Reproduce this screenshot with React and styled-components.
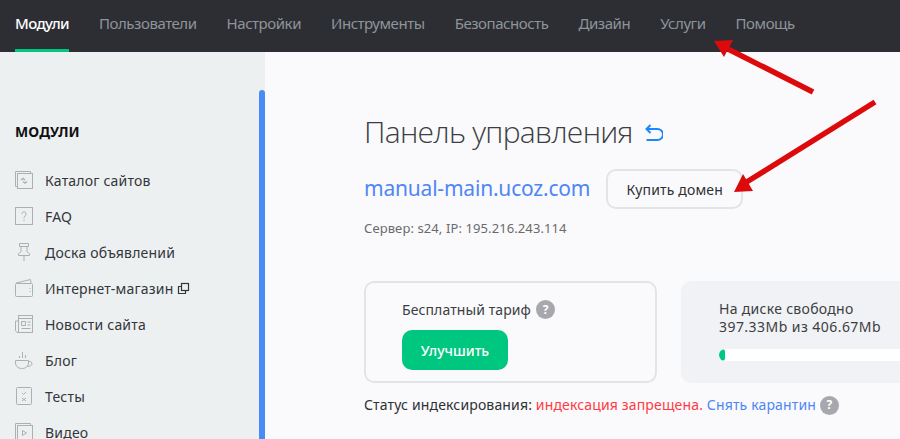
import React from "react";
import styled, { createGlobalStyle } from "styled-components";

const Global = createGlobalStyle`
  html, body { margin: 0; padding: 0; height: 439px; overflow: hidden; background: #fafafc; }
  body { font-family: "Noto Sans", "Liberation Sans", sans-serif; color: #2f3034; }
  * { box-sizing: border-box; }
`;
const Page = styled.div`
  position: relative; width: 900px; height: 439px; overflow: hidden;
  display: flex; flex-direction: column;
`;
const TopBar = styled.nav`
  height: 52px; flex: none; background: #2d2e33; display: flex; padding-left: 15px; gap: 30px;
`;
const TopLink = styled.a`
  height: 52px; display: block; padding-top: 14px; font-size: 15px; line-height: 18px;
  letter-spacing: ${p => (p.$active ? "-0.6px" : "-0.45px")}; font-weight: ${p => (p.$active ? 500 : 400)};
  color: ${p => (p.$active ? "#fff" : "#8f9499")};
  border-bottom: 3px solid ${p => (p.$active ? "#00c77f" : "transparent")};
`;
const Body = styled.div`
  flex: 1; display: flex; min-height: 0;
`;
const Sidebar = styled.aside`
  width: 265px; flex: none; background: #edf0f1; position: relative; padding: 71px 0 0 15px;
`;
const ScrollThumb = styled.div`
  position: absolute; top: 38px; right: 0; bottom: 0; width: 6px; background: #4a8cf7; border-radius: 3px 3px 0 0;
`;
const SideTitle = styled.h3`
  margin: 0 0 27px; font-size: 14px; line-height: 18px; font-weight: 700; color: #111; letter-spacing: 0.1px;
`;
const SideList = styled.ul`
  list-style: none; margin: 0; padding: 0; display: flex; flex-direction: column; gap: 12px;
`;
const SideItem = styled.li`
  height: 24px; display: flex; align-items: center; gap: 12px;
  font-size: 14px; line-height: 18px; color: #33363b; letter-spacing: 0.2px;
`;
const SideLabel = styled.span`
  padding-top: 2px; white-space: nowrap;
`;
const SideIcon = styled.svg`
  width: 18px; height: 18px; flex: none; fill: none; stroke: #adb0b2; stroke-width: 1;
`;
const External = styled.svg`
  width: 13px; height: 13px; margin-left: -8px; fill: none; stroke: #33363b; stroke-width: 1.2;
`;
const Main = styled.main`
  flex: 1; padding: 59px 0 0 99px; background: #fafafc; min-width: 0;
`;
const TitleRow = styled.div`
  display: flex; align-items: center; gap: 12px; height: 42px;
`;
const Title = styled.h1`
  margin: 0; font-family: "Open Sans", "Noto Sans", sans-serif; font-size: 30px; line-height: 42px; font-weight: 300; color: #3c3e43; letter-spacing: -0.72px;
`;
const ReturnIcon = styled.svg`
  width: 18px; height: 17px; flex: none; fill: none; stroke: #1c86ff; stroke-width: 2;
`;
const DomainRow = styled.div`
  margin-top: 16px; display: flex; align-items: center; gap: 16px; height: 40px;
`;
const Domain = styled.a`
  font-size: 21px; line-height: 24px; color: #4f86f7; letter-spacing: -0.2px; padding-bottom: 2px;
`;
const BuyButton = styled.button`
  width: 137px; height: 40px; background: #fafafc; border: 2px solid #e3e4e6; border-radius: 10px;
  font: inherit; font-size: 14px; color: #2f3034; padding: 0; letter-spacing: 0.15px;
`;
const Server = styled.p`
  margin: 11px 0 0; font-size: 13px; line-height: 16px; color: #6a6a6a; letter-spacing: 0.1px;
`;
const Cards = styled.div`
  margin-top: 45px; display: flex; gap: 24px;
`;
const PlanCard = styled.section`
  width: 293px; height: 102px; flex: none; border: 2px solid #e3e4e6; border-radius: 10px; padding: 15px 0 0 36px;
`;
const PlanLine = styled.div`
  display: flex; align-items: center; gap: 5px; height: 22px; font-size: 14px; color: #3c3e42; letter-spacing: 0.1px;
`;
const Help = styled.span`
  width: 19px; height: 19px; border-radius: 50%; background: #a7a8ad; color: #fff; flex: none;
  display: inline-flex; align-items: center; justify-content: center; font-size: 12px; font-weight: 700;
`;
const UpgradeButton = styled.button`
  display: block; margin-top: 10px; width: 106px; height: 40px; background: #00c77f; border: 0; border-radius: 10px;
  color: #fff; font: inherit; font-size: 14px; font-weight: 500; padding: 0; letter-spacing: 0;
`;
const DiskCard = styled.section`
  flex: 1; height: 102px; background: #f0f2f5; border-radius: 10px 0 0 10px; padding: 19px 0 0 38px;
  font-size: 14px; line-height: 18px; color: #3c3e42; letter-spacing: 0.3px;
`;
const DiskNumbers = styled.span`
  letter-spacing: 0.45px;
`;
const DiskBar = styled.div`
  margin-top: 13px; height: 12px; background: #fff; border-radius: 6px 0 0 6px; overflow: hidden;
`;
const DiskFill = styled.div`
  height: 100%; width: ${p => p.$width}px; background: #00c77f; border-radius: 6px;
`;
const StatusLine = styled.div`
  margin-top: 11px; display: flex; align-items: center; gap: 4px; font-size: 14px; line-height: 20px; color: #2f3034; letter-spacing: 0.15px; padding-top: 1px;
`;
const Danger = styled.span` color: #ff3b45; `;
const Link = styled.a` color: #4f86f7; `;
const Arrows = styled.svg`
  position: absolute; left: 0; top: 0; width: 900px; height: 439px; pointer-events: none;
`;

const icons = {
  catalog: <><path d="M15.500 2.500V.500H.500v15h2" /><rect x="2.500" y="2.500" width="15" height="15" /><path d="M6 9l2-1.500 2 1.500M8 10.500l2 1.500 2-1.500" strokeWidth="1.500" /></>,
  faq: <><rect x=".5" y=".5" width="17" height="17" /><path d="M7 7c0-3 4-3 4 0 0 2-2 2-2 4M9 12.500V14" /></>,
  board: <path d="M4.500.5h9v3h-9zM6 3.500v5L3.500 11v1.500h11V11L12 8.500v-5M9 12.500V18" />,
  shop: <><path d="M1 4L15.500.5 16 4" /><rect x=".5" y="4.500" width="17" height="13" rx="1" /><path d="M15 9v1M15 12v1" /></>,
  news: <><path d="M3.500 6H.5v9.500l1.500 2h1.500" /><rect x="3.500" y=".5" width="14" height="17" /><path d="M3.500 3.500h14M6.500 6.500h4v4h-4zM12.500 7h3M12.500 10h3M6.500 13.500h9" /></>,
  blog: <path d="M.5 9.500h13v2.500a6 5.500 0 0 1-6 5.500h-1a6 5.500 0 0 1-6-5.500zM13.500 10.500c5.500-.5 4 5.500-1 5M4.500 7V5M7.500 7V1M10.500 7V4" />,
  tests: <><rect x="1.500" y=".5" width="15" height="17" rx="1" /><path d="M7 6l1.500 1.500L11 5M7 11l4 3M11 11l-4 3" /></>,
  video: <><path d="M.5 16V.5h15v2" /><rect x="2.500" y="2.500" width="15" height="15" /><path d="M7.500 7.500l4 2.500-4 2.500z" /></>,
};

const modules = [
  ["catalog", "Каталог сайтов"], ["faq", "FAQ"], ["board", "Доска объявлений"], ["shop", "Интернет-магазин"],
  ["news", "Новости сайта"], ["blog", "Блог"], ["tests", "Тесты"], ["video", "Видео"],
];
const nav = ["Модули", "Пользователи", "Настройки", "Инструменты", "Безопасность", "Дизайн", "Услуги", "Помощь"];

export default function App() {
  return (
    <Page>
      <Global />
      <TopBar>
        {nav.map((n, i) => <TopLink key={n} $active={i === 0}>{n}</TopLink>)}
      </TopBar>
      <Body>
        <Sidebar>
          <ScrollThumb />
          <SideTitle>МОДУЛИ</SideTitle>
          <SideList>
            {modules.map(([k, t]) => (
              <SideItem key={k}>
                <SideIcon viewBox="0 0 18 18">{icons[k]}</SideIcon>
                <SideLabel>{t}</SideLabel>
                {k === "shop" && (
                  <External viewBox="0 0 13 13"><rect x="4.500" y="1.500" width="7" height="7" /><path d="M4.500 4.500h-3v7h7v-3" /></External>
                )}
              </SideItem>
            ))}
          </SideList>
        </Sidebar>
        <Main>
          <TitleRow>
            <Title>Панель управления</Title>
            <ReturnIcon viewBox="0 0 18 17">
              <path d="M5.500 1L1.500 5l4 4M1.500 5h11a5.500 5.500 0 0 1 0 11H1.500" />
            </ReturnIcon>
          </TitleRow>
          <DomainRow>
            <Domain>manual-main.ucoz.com</Domain>
            <BuyButton>Купить домен</BuyButton>
          </DomainRow>
          <Server>Сервер: s24, IP: 195.216.243.114</Server>
          <Cards>
            <PlanCard>
              <PlanLine>Бесплатный тариф <Help>?</Help></PlanLine>
              <UpgradeButton>Улучшить</UpgradeButton>
            </PlanCard>
            <DiskCard>
              На диске свободно<br /><DiskNumbers>397.33Mb из 406.67Mb</DiskNumbers>
              <DiskBar><DiskFill $width={6} /></DiskBar>
            </DiskCard>
          </Cards>
          <StatusLine>
            <span>Статус индексирования: <Danger>индексация запрещена.</Danger> <Link>Снять карантин</Link></span>
            <Help>?</Help>
          </StatusLine>
        </Main>
      </Body>
      <Arrows viewBox="0 0 900 439">
        <path d="M813 92L728 49" stroke="#dc0a0a" strokeWidth="5.500" />
        <path d="M714 41L733 40L724 57z" fill="#dc0a0a" />
        <path d="M875 102L745 183" stroke="#dc0a0a" strokeWidth="5.500" />
        <path d="M734 192L743 174L753 191z" fill="#dc0a0a" />
      </Arrows>
    </Page>
  );
}
